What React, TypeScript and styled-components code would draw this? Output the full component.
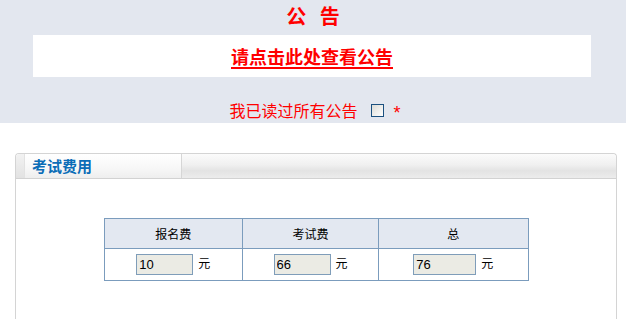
import React, { useState } from "react";
import styled, { createGlobalStyle } from "styled-components";

const GlobalStyle = createGlobalStyle`
  body {
    margin: 0;
    background: #ffffff;
    font-family: "Noto Sans CJK SC", "DejaVu Sans", sans-serif;
    font-size: 12px;
  }
`;

const TopBand = styled.div`
  background: #e3e7ef;
  height: 123px;
  box-sizing: border-box;
  padding-top: 2px;
  text-align: center;
`;

const Title = styled.div`
  color: #ff0000;
  font-size: 20px;
  font-weight: bold;
  line-height: 28px;
  height: 33px;
`;

const NoticeBox = styled.div`
  background: #ffffff;
  height: 42px;
  margin: 0 35px 0 33px;
  display: flex;
  align-items: center;
  justify-content: center;
`;

const NoticeLink = styled.a`
  color: #ff0000;
  font-size: 18px;
  font-weight: bold;
  text-decoration: underline;
  text-underline-offset: 3px;
  text-decoration-thickness: 2px;
  cursor: pointer;
`;

const ReadRow = styled.label`
  display: flex;
  align-items: center;
  justify-content: center;
  margin-top: 20px;
  padding-left: 4px;
  color: #ff0000;
  font-size: 16px;
  line-height: 20px;
  cursor: pointer;
`;

const Box = styled.span<{ $checked: boolean }>`
  width: 11px;
  height: 11px;
  margin: 0 10px 0 13px;
  border: 1px solid #1c5180;
  background: linear-gradient(135deg, #dcdcd7 0%, #ffffff 100%);
  display: inline-flex;
  align-items: center;
  justify-content: center;
  font-size: 10px;
  line-height: 1;
  color: #21a121;
`;

const Star = styled.span`
  font-family: "Liberation Sans", sans-serif;
  font-size: 18px;
  margin-top: 6px;
`;

const Panel = styled.div`
  margin: 30px 9px 0 15px;
  border: 1px solid #d4d4d4;
  border-bottom: none;
  border-radius: 4px 4px 0 0;
  height: 170px;
`;

const PanelHead = styled.div`
  height: 24px;
  display: flex;
  background: linear-gradient(#fbfbfb 0%, #f0f0f0 45%, #e3e3e3 70%, #ececec 100%);
  border-bottom: 1px solid #d2d2d2;
  border-radius: 4px 4px 0 0;
`;

const TabEdge = styled.div`
  width: 8px;
  border-right: 1px solid #e2e2e2;
  background: linear-gradient(#f2f2f2, #e2e2e2);
  border-radius: 4px 0 0 0;
`;

const Tab = styled.div`
  width: 149px;
  padding-left: 7px;
  background: linear-gradient(#ffffff 0%, #f7f7f7 60%, #eeeeee 100%);
  border-right: 1px solid #d6d6d6;
  color: #0b6db7;
  font-size: 15px;
  font-weight: bold;
  line-height: 24px;
`;

const Fees = styled.table`
  margin: 39px auto 0;
  border-collapse: collapse;
  width: 425px;
  font-size: 12px;
  color: #000000;
`;

const HeadCell = styled.th<{ $w: number }>`
  width: ${(p) => p.$w}px;
  height: 29px;
  background: #e3e8f1;
  border: 1px solid #7b9cbd;
  font-weight: normal;
  padding: 0;
`;

const Cell = styled.td`
  height: 31px;
  border: 1px solid #7b9cbd;
  text-align: center;
  padding: 0;
`;

const Amount = styled.input<{ $w: number }>`
  width: ${(p) => p.$w}px;
  height: 21px;
  box-sizing: border-box;
  border: 1px solid #7f9db9;
  background: #ebebe4;
  font-family: "Liberation Sans", sans-serif;
  font-size: 13px;
  padding: 0 2px;
  color: #000;
  vertical-align: middle;
  margin-right: 5px;
`;

const fees = [
  { label: "报名费", value: "10", w: 139, iw: 57 },
  { label: "考试费", value: "66", w: 136, iw: 57 },
  { label: "总", value: "76", w: 150, iw: 63 },
];

export default function App() {
  const [agreed, setAgreed] = useState(false);

  return (
    <>
      <GlobalStyle />
      <TopBand>
        <Title>公&nbsp;&nbsp;&nbsp;告</Title>
        <NoticeBox>
          <NoticeLink>请点击此处查看公告</NoticeLink>
        </NoticeBox>
        <ReadRow onClick={() => setAgreed(!agreed)}>
          我已读过所有公告
          <Box $checked={agreed}>{agreed ? "✓" : ""}</Box>
          <Star>*</Star>
        </ReadRow>
      </TopBand>
      <Panel>
        <PanelHead>
          <TabEdge />
          <Tab>考试费用</Tab>
        </PanelHead>
        <Fees>
          <thead>
            <tr>
              {fees.map((f) => (
                <HeadCell key={f.label} $w={f.w}>
                  {f.label}
                </HeadCell>
              ))}
            </tr>
          </thead>
          <tbody>
            <tr>
              {fees.map((f) => (
                <Cell key={f.label}>
                  <Amount $w={f.iw} defaultValue={f.value} readOnly />元
                </Cell>
              ))}
            </tr>
          </tbody>
        </Fees>
      </Panel>
    </>
  );
}
